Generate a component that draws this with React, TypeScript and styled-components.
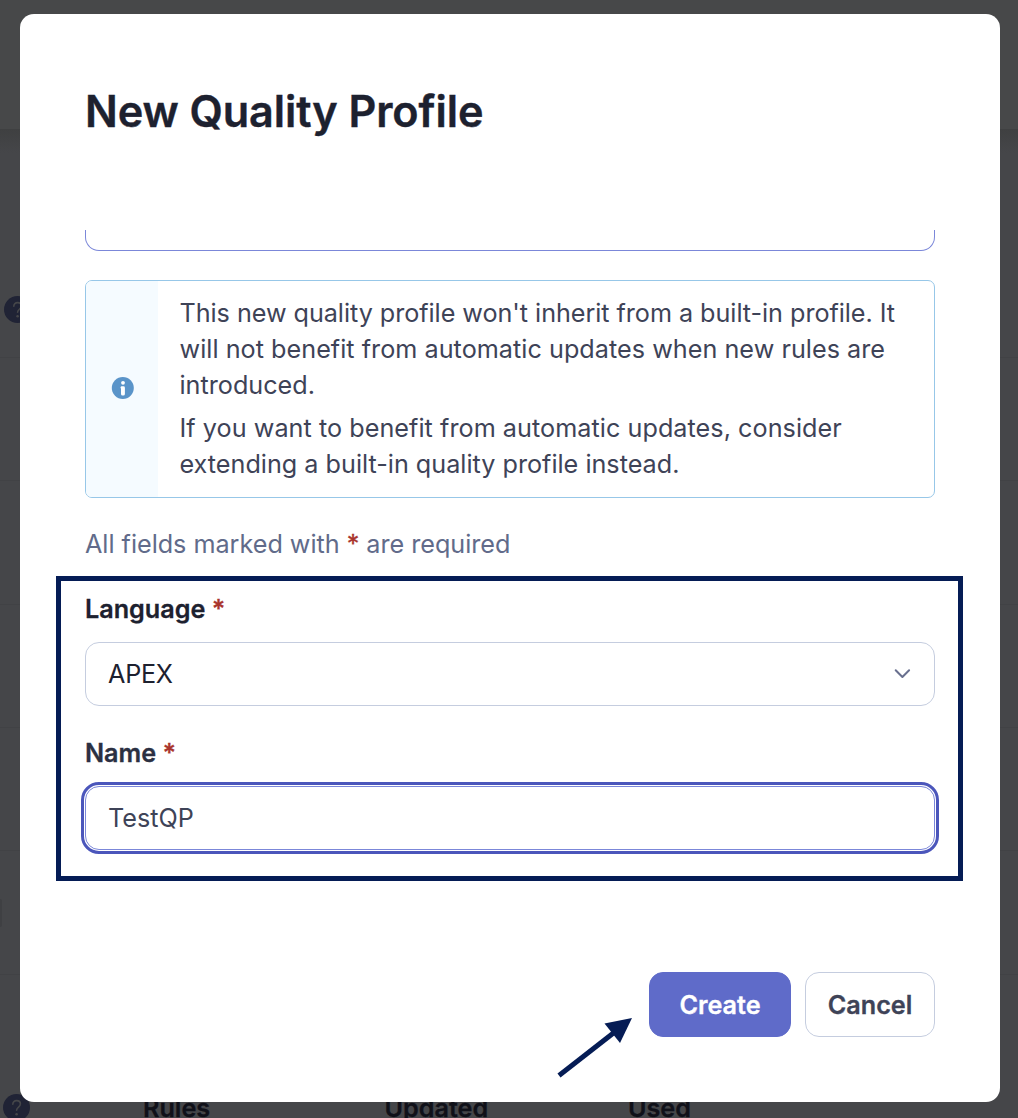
import React from "react";
import styled, { createGlobalStyle } from "styled-components";

const GlobalStyle = createGlobalStyle`
  *, *::before, *::after { box-sizing: border-box; }
  body {
    margin: 0;
    font-family: Inter, "Liberation Sans", sans-serif;
    font-size: 25.2px;
    line-height: 36px;
    color: #3e4357;
    -webkit-font-smoothing: antialiased;
  }
  h1, p { margin: 0; }
`;

const Screen = styled.div`
  position: relative;
  width: 1018px;
  height: 1118px;
  overflow: hidden;
  background: #454649;
`;

const Backdrop = styled.div`
  display: flex;
  flex-direction: column;
  height: 100%;
`;

const TopBar = styled.div`
  height: 129px;
  flex: none;
  background: #474849;
`;

const BarShadow = styled.div`
  height: 24px;
  flex: none;
  background: linear-gradient(#3f4041, #454649);
`;

const HelpRow = styled.div`
  display: flex;
  flex: none;
  height: 205px;
  padding: 143px 0 0 4px;
  border-bottom: 1px solid #414245;
`;

const ListRow = styled.div<{ $height: number }>`
  flex: none;
  display: flex;
  align-items: center;
  height: ${(p) => p.$height}px;
  border-bottom: 1px solid #414245;
`;

const Stub = styled.div`
  width: 2px;
  height: 28px;
  border-radius: 0 3px 3px 0;
  background: #3f4043;
`;

const TableHead = styled.div`
  display: grid;
  grid-template-columns: 140px 241.5px 243.5px 1fr;
  padding: 115px 0 0 3px;
  font-weight: 600;
  color: #101119;
  -webkit-text-stroke: 0.3px currentColor;
`;

const HeadHelp = styled.div`
  padding-top: 4px;
  height: 32px;
`;

const HelpSvg = styled.svg`
  display: block;
  width: 27px;
  height: 27px;
`;

const Overlay = styled.div`
  position: absolute;
  inset: 0;
  padding: 14px 18px 16px 20px;
  display: flex;
`;

const Modal = styled.section`
  flex: 1;
  display: flex;
  flex-direction: column;
  border-radius: 14px;
  background: #fff;
  overflow: hidden;
`;

const Title = styled.h1`
  flex: none;
  height: 216px;
  padding: 68px 65px 0;
  font-size: 43.2px;
  line-height: 58px;
  font-weight: 600;
  letter-spacing: -0.09px;
  color: #1d212f;
  -webkit-text-stroke: 0.4px currentColor;
`;

const Body = styled.div`
  flex: 1;
  overflow: hidden;
  display: flex;
  flex-direction: column;
  padding: 0 65px;
`;

const ScrolledField = styled.div`
  flex: none;
  height: 21px;
  margin-bottom: 29px;
  border: 1px solid #7b87d9;
  border-top: 0;
  border-radius: 0 0 14px 14px;
`;

const Message = styled.div`
  flex: none;
  display: flex;
  height: 218px;
  border: 1px solid #97c7e8;
  border-radius: 7px;
  overflow: hidden;
`;

const MessageSide = styled.div`
  width: 72px;
  flex: none;
  display: flex;
  align-items: center;
  justify-content: center;
  padding-bottom: 2px;
  background: #f5fbff;
`;

const MessageText = styled.div`
  display: flex;
  flex-direction: column;
  gap: 7px;
  padding: 14px 21.5px;
  white-space: nowrap;
`;

const Line = styled.span<{ $tracking?: number }>`
  display: block;
  letter-spacing: ${(p) => p.$tracking ?? 0}px;
`;

const RequiredNote = styled.p`
  margin: 28px 0 29px;
  letter-spacing: -0.02px;
  color: #616b8a;
`;

const Star = styled.span`
  color: #a9342c;
  -webkit-text-stroke: 0.3px currentColor;
`;

const Label = styled.label`
  display: block;
  font-weight: 600;
  color: #1d212f;
  margin-bottom: 15px;
  -webkit-text-stroke: 0.3px currentColor;
`;

const NameLabel = styled(Label)`
  color: #2b3042;
  margin-top: 29px;
`;

const Select = styled.div`
  flex: none;
  display: flex;
  align-items: center;
  justify-content: space-between;
  height: 64px;
  padding: 0 22px;
  border: 1px solid #c5cddf;
  border-radius: 14px;
  color: #1d212f;
`;

const SelectValue = styled.span`
  letter-spacing: -0.25px;
`;

const Input = styled.input`
  flex: none;
  height: 64px;
  padding: 0 22px;
  border: 1px solid #7b87d9;
  border-radius: 14px;
  outline: 3px solid #4b56bb;
  outline-offset: 1px;
  font: inherit;
  color: #3e4357;
  background: #fff;
`;

const Footer = styled.div`
  flex: none;
  display: flex;
  justify-content: flex-end;
  gap: 14px;
  padding: 0 65px 65px;
`;

const Button = styled.button<{ $primary?: boolean }>`
  width: ${(p) => (p.$primary ? 142 : 130)}px;
  height: 65px;
  padding: 0;
  border: 1px solid ${(p) => (p.$primary ? "#5f6bc9" : "#c5cddf")};
  border-radius: 14px;
  background: ${(p) => (p.$primary ? "#5f6bc9" : "#fff")};
  color: ${(p) => (p.$primary ? "#fff" : "#3e4357")};
  font: inherit;
  font-weight: 600;
  -webkit-text-stroke: 0.3px currentColor;
`;

const Highlight = styled.div`
  position: absolute;
  left: 56px;
  top: 576px;
  width: 907px;
  height: 305px;
  border: 5px solid #051c55;
  pointer-events: none;
`;

const Arrow = styled.svg`
  position: absolute;
  left: 550px;
  top: 1010px;
  width: 90px;
  height: 75px;
  pointer-events: none;
`;

const HelpIcon = () => (
  <HelpSvg viewBox="0 0 27 27">
    <circle cx="13.5" cy="13.5" r="13.5" fill="#202335" />
    <path
      d="M9.8 10.2c0-2.3 1.6-3.6 3.8-3.6s3.8 1.4 3.8 3.4c0 3-3.8 3.1-3.8 6.3"
      fill="none"
      stroke="#454649"
      strokeWidth="1.6"
      strokeLinecap="round"
    />
    <circle cx="13.6" cy="20.2" r="1.3" fill="#454649" />
  </HelpSvg>
);

const InfoIcon = () => (
  <svg width="23" height="22" viewBox="0 0 23 22">
    <circle cx="11.8" cy="11" r="11" fill="#5a94c9" />
    <circle cx="12" cy="5.8" r="1.9" fill="#fff" />
    <path
      d="M10.7 9.3h1.8a1.4 1.4 0 0 1 1.4 1.4v6.3a1.6 1.6 0 0 1-1.6 1.6h-.7A1.6 1.6 0 0 1 10 17v-5.4a1.1 1.1 0 0 1-.4-1.4 1.2 1.2 0 0 1 1.1-.9z"
      fill="#fff"
    />
  </svg>
);

const Chevron = () => (
  <svg width="20" height="20" viewBox="0 0 20 20" fill="none">
    <path d="M3.7 6.3l6.7 6.7 6.7-6.7" stroke="#69708f" strokeWidth="2" strokeLinecap="round" strokeLinejoin="round" />
  </svg>
);

const App: React.FC = () => (
  <Screen>
    <GlobalStyle />
    <Backdrop aria-hidden>
      <TopBar />
      <BarShadow />
      <HelpRow>
        <HelpIcon />
      </HelpRow>
      <ListRow $height={123} />
      <ListRow $height={124} />
      <ListRow $height={123} />
      <ListRow $height={123} />
      <ListRow $height={124}>
        <Stub />
      </ListRow>
      <TableHead>
        <HeadHelp>
          <HelpIcon />
        </HeadHelp>
        <span>Rules</span>
        <span>Updated</span>
        <span>Used</span>
      </TableHead>
    </Backdrop>
    <Overlay>
      <Modal role="dialog">
        <Title>New Quality Profile</Title>
        <Body>
          <ScrolledField />
          <Message>
            <MessageSide>
              <InfoIcon />
            </MessageSide>
            <MessageText>
              <p>
                <Line $tracking={-0.045}>This new quality profile won't inherit from a built-in profile. It</Line>
                <Line $tracking={0.03}>will not benefit from automatic updates when new rules are</Line>
                <Line>introduced.</Line>
              </p>
              <p>
                <Line $tracking={0.045}>If you want to benefit from automatic updates, consider</Line>
                <Line>extending a built-in quality profile instead.</Line>
              </p>
            </MessageText>
          </Message>
          <RequiredNote>
            All fields marked with <Star>*</Star> are required
          </RequiredNote>
          <Label>
            Language <Star>*</Star>
          </Label>
          <Select>
            <SelectValue>APEX</SelectValue>
            <Chevron />
          </Select>
          <NameLabel>
            Name <Star>*</Star>
          </NameLabel>
          <Input defaultValue="TestQP" />
        </Body>
        <Footer>
          <Button $primary>Create</Button>
          <Button>Cancel</Button>
        </Footer>
      </Modal>
    </Overlay>
    <Highlight />
    <Arrow viewBox="0 0 90 75">
      <path d="M9 65.5L66 21" stroke="#051c55" strokeWidth="5" />
      <path d="M82 8L54.5 13.5L70 33Z" fill="#051c55" />
    </Arrow>
  </Screen>
);

export default App;
